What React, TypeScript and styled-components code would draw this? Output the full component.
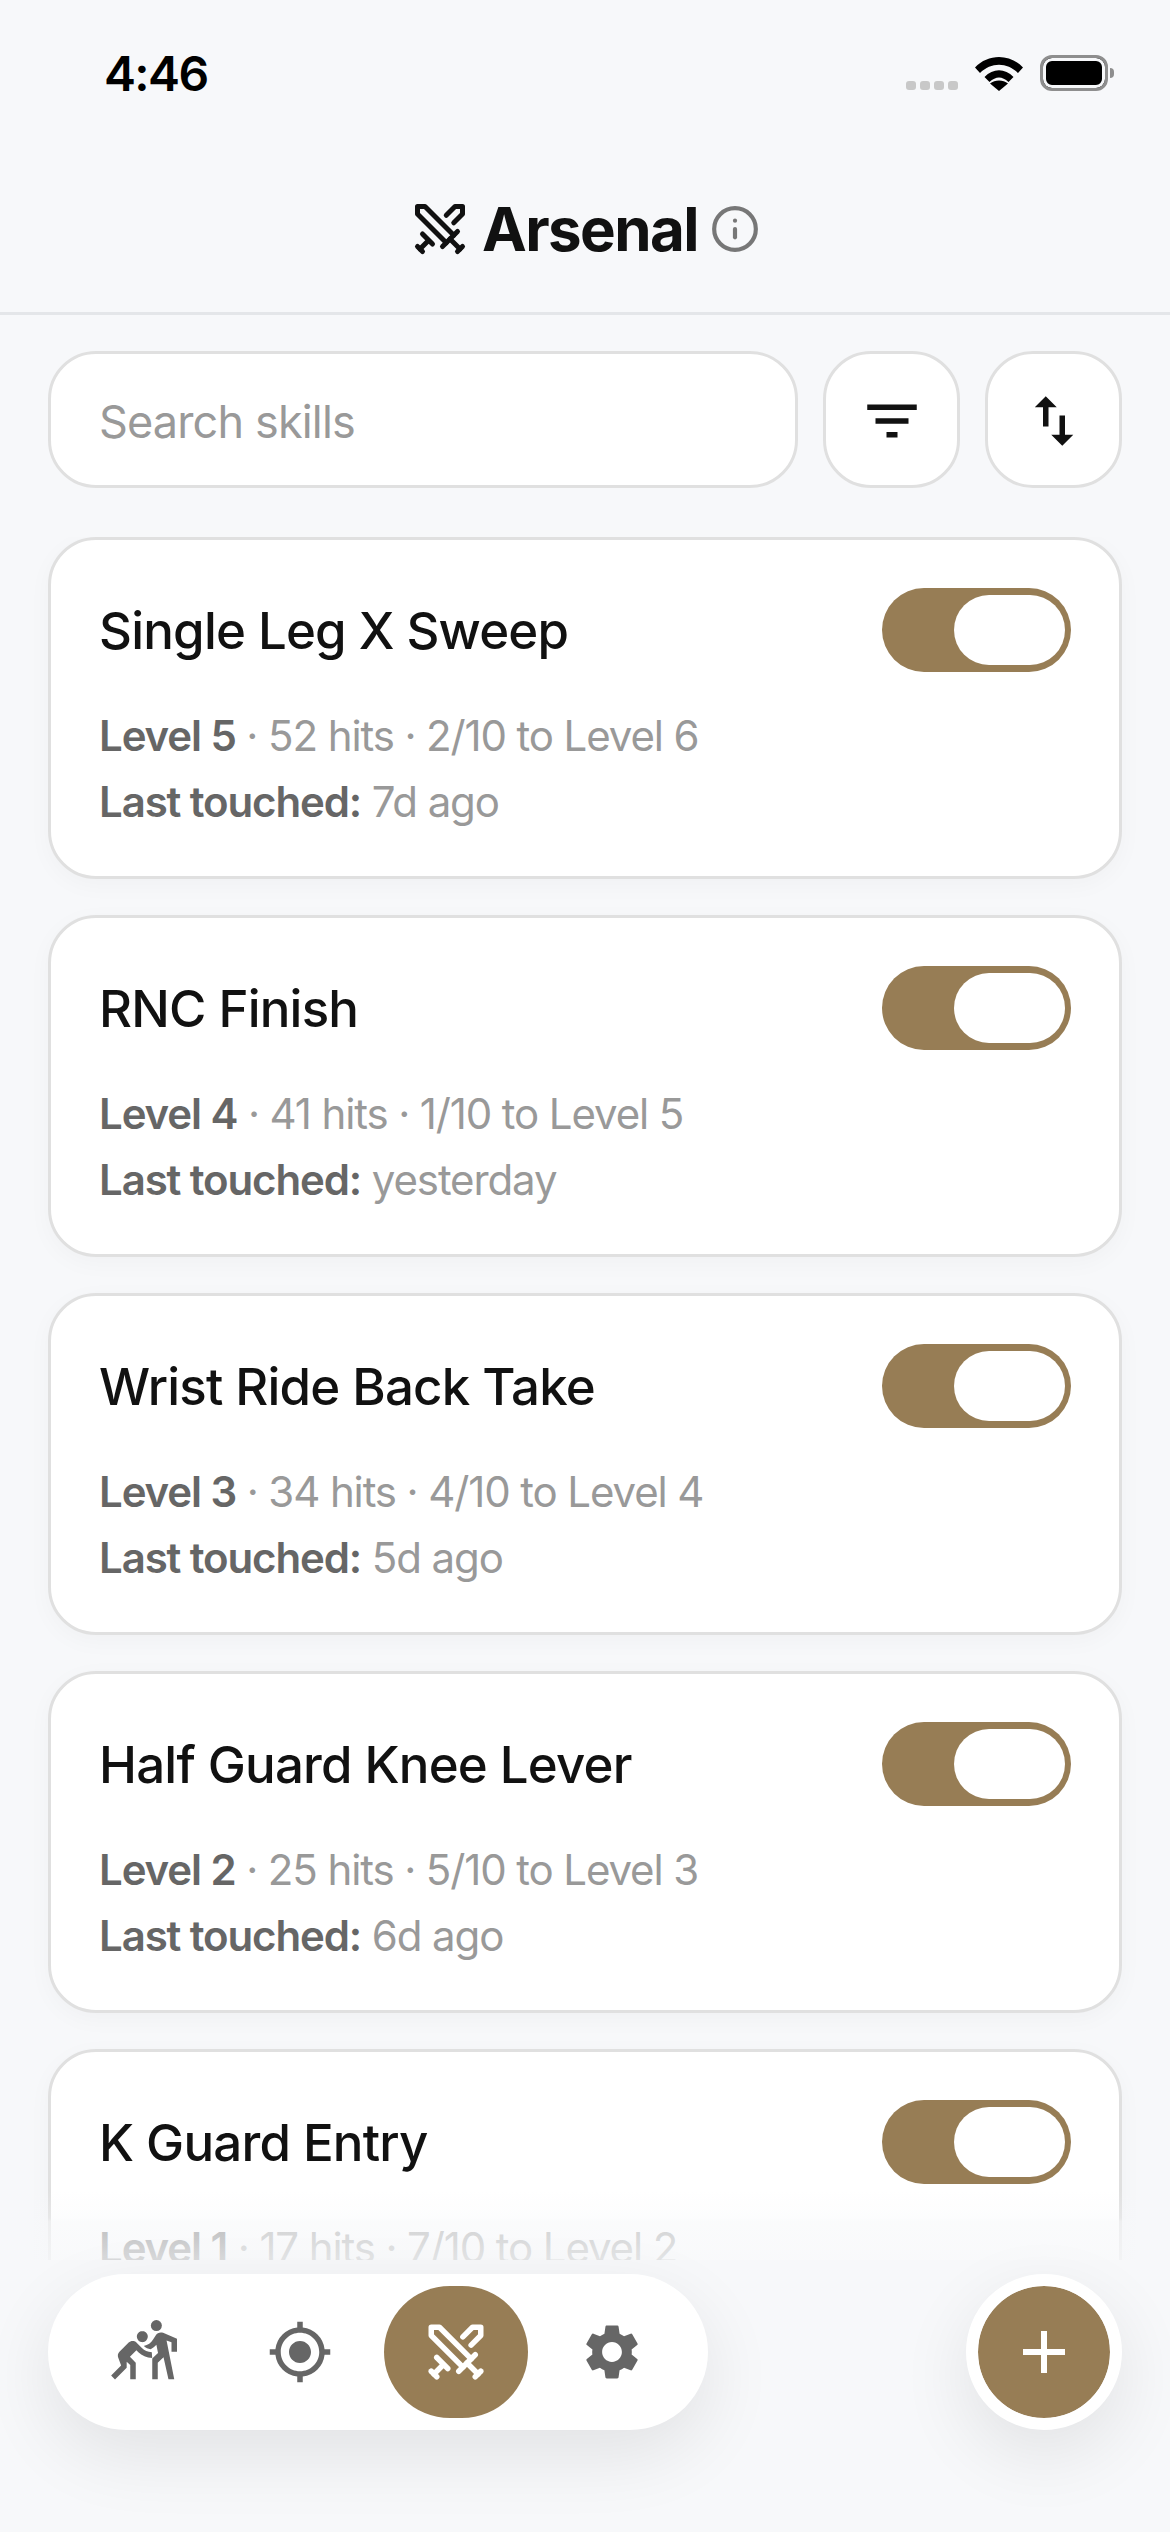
import React from 'react'
import styled, { createGlobalStyle } from 'styled-components'
import { Info, Swords } from 'lucide-react'
import { MdAdd, MdFilterList, MdGpsFixed, MdSettings, MdSportsKabaddi, MdSwapVert } from 'react-icons/md'

const ACCENT = '#977d55'

const skills = [
  { name: 'Single Leg X Sweep', level: 5, hits: 52, progress: 2, touched: '7d ago' },
  { name: 'RNC Finish', level: 4, hits: 41, progress: 1, touched: 'yesterday' },
  { name: 'Wrist Ride Back Take', level: 3, hits: 34, progress: 4, touched: '5d ago' },
  { name: 'Half Guard Knee Lever', level: 2, hits: 25, progress: 5, touched: '6d ago' },
  { name: 'K Guard Entry', level: 1, hits: 17, progress: 7, touched: '3d ago' },
]

const App = () => {
  return (
    <Screen>
      <GlobalStyle />
      <StatusBar>
        <Clock>4:46</Clock>
        <StatusIcons>
          <SignalDots>
            <i /><i /><i /><i />
          </SignalDots>
          <svg width="48" height="36" viewBox="0 0 48 36">
            <path d="M0 12.5 C13-1.5 35-1.5 48 12.5 L43 18 C32 7 16 7 5 18 Z" fill="#000" />
            <path d="M9.5 22 C18 13 30 13 38.500 22 L33.500 27 C27 21 21 21 14.500 27 Z" fill="#000" />
            <path d="M24 36 L15 28.500 C20 24.500 28 24.500 33 28.500 Z" fill="#000" />
          </svg>
          <Battery />
        </StatusIcons>
      </StatusBar>

      <Header>
        <Swords size={60} color="#111" strokeWidth={2} />
        <HeaderTitle>Arsenal</HeaderTitle>
        <Info size={50} color="#777" strokeWidth={2} />
      </Header>

      <Toolbar>
        <SearchBox placeholder="Search skills" readOnly />
        <IconButton><MdFilterList size={66} color="#111" /></IconButton>
        <IconButton><MdSwapVert size={66} color="#111" /></IconButton>
      </Toolbar>

      <SkillList>
        {skills.map((skill) => (
          <SkillCard key={skill.name}>
            <CardTop>
              <SkillName>{skill.name}</SkillName>
              <Toggle><Thumb /></Toggle>
            </CardTop>
            <MetaLine>
              <b>Level {skill.level}</b> · {skill.hits} hits · {skill.progress}/10 to Level {skill.level + 1}
            </MetaLine>
            <MetaLine>
              <b>Last touched:</b> {skill.touched}
            </MetaLine>
          </SkillCard>
        ))}
      </SkillList>

      <BottomFade />

      <TabBar>
        <Tab><MdSportsKabaddi size={66} color="#666" /></Tab>
        <Tab><MdGpsFixed size={66} color="#666" /></Tab>
        <Tab $active><Swords size={66} color="#fff" strokeWidth={2} /></Tab>
        <Tab><MdSettings size={66} color="#666" /></Tab>
      </TabBar>

      <AddButton><MdAdd size={72} color="#fff" /></AddButton>
    </Screen>
  )
}

const GlobalStyle = createGlobalStyle`
  html, body {
    margin: 0;
    padding: 0;
    background: #f7f8fa;
  }
  * {
    box-sizing: border-box;
  }
`

const Screen = styled.div`
  position: relative;
  width: 1170px;
  height: 2532px;
  overflow: hidden;
  display: flex;
  flex-direction: column;
  background: #f7f8fa;
  font-family: Inter, "Noto Sans", sans-serif;
  color: #111;
`

const StatusBar = styled.div`
  height: 144px;
  flex: none;
  display: flex;
  justify-content: space-between;
  align-items: flex-start;
  padding: 46px 62px 0 104px;
`

const Clock = styled.div`
  font-size: 48px;
  line-height: 56px;
  font-weight: 600;
  letter-spacing: -1.6px;
  color: #000;
`

const StatusIcons = styled.div`
  display: flex;
  align-items: flex-end;
  gap: 17px;
  padding-top: 9px;
`

const SignalDots = styled.div`
  display: flex;
  gap: 4px;
  margin-bottom: 1px;

  i {
    display: block;
    width: 10px;
    height: 9px;
    border-radius: 3px;
    background: #c8c8c8;
  }
`

const Battery = styled.div`
  position: relative;
  width: 68px;
  height: 36px;
  border: 3px solid #8e8e8e;
  border-radius: 12px;
  background: #000;
  box-shadow: inset 0 0 0 3px #f7f8fa;

  &::after {
    content: '';
    position: absolute;
    right: -9px;
    top: 10px;
    width: 4px;
    height: 10px;
    border-radius: 0 4px 4px 0;
    background: #8e8e8e;
  }
`

const Header = styled.header`
  height: 171px;
  flex: none;
  display: flex;
  align-items: center;
  justify-content: center;
  gap: 12px;
  padding-top: 2px;
  border-bottom: 3px solid #e4e6e9;
`

const HeaderTitle = styled.h1`
  margin: 0;
  font-size: 60px;
  line-height: 68px;
  font-weight: 700;
  letter-spacing: -1.6px;
  color: #111;
`

const Toolbar = styled.div`
  flex: none;
  display: flex;
  gap: 25px;
  padding: 36px 48px 0;
`

const SearchBox = styled.input`
  flex: 1;
  min-width: 0;
  height: 137px;
  padding: 3px 48px 0;
  border: 3px solid #e0e0e0;
  border-radius: 48px;
  background: #fff;
  font-family: inherit;
  font-size: 45px;
  letter-spacing: -0.85px;
  outline: none;

  &::placeholder {
    color: #999;
    opacity: 1;
  }
`

const IconButton = styled.button`
  flex: none;
  width: 137px;
  height: 137px;
  padding: 2px 0 0;
  display: flex;
  align-items: center;
  justify-content: center;
  border: 3px solid #e0e0e0;
  border-radius: 48px;
  background: #fff;
`

const SkillList = styled.div`
  flex: none;
  height: 1723px;
  margin-top: 49px;
  padding: 0 48px;
  overflow: hidden;
  display: flex;
  flex-direction: column;
  gap: 36px;
`

const SkillCard = styled.div`
  flex: none;
  height: 342px;
  padding: 48px;
  border: 3px solid #e0e0e0;
  border-radius: 48px;
  background: #fff;
  box-shadow: 0 6px 24px rgba(0, 0, 0, 0.03);
`

const CardTop = styled.div`
  display: flex;
  align-items: center;
  justify-content: space-between;
  height: 84px;
  margin-bottom: 31px;
`

const SkillName = styled.div`
  margin-top: 1px;
  font-size: 51px;
  line-height: 60px;
  font-weight: 500;
  letter-spacing: -0.8px;
  color: #111;
`

const Toggle = styled.div`
  width: 189px;
  height: 84px;
  padding: 7px 6px;
  display: flex;
  justify-content: flex-end;
  border-radius: 42px;
  background: ${ACCENT};
`

const Thumb = styled.div`
  width: 111px;
  height: 70px;
  border-radius: 35px;
  background: #fff;
`

const MetaLine = styled.div`
  font-size: 42px;
  line-height: 66px;
  letter-spacing: -1.12px;
  color: #999;

  b {
    font-weight: 600;
    color: #666;
  }
`

const BottomFade = styled.div`
  position: absolute;
  left: 0;
  right: 0;
  top: 2190px;
  height: 70px;
  background: linear-gradient(
    to bottom,
    rgba(247, 248, 250, 0),
    rgba(247, 248, 250, 0.3) 40%,
    rgba(247, 248, 250, 0.6) 45%,
    rgba(247, 248, 250, 0.8)
  );
`

const TabBar = styled.nav`
  position: absolute;
  left: 48px;
  top: 2274px;
  width: 660px;
  height: 156px;
  padding: 0 24px;
  display: flex;
  align-items: center;
  gap: 12px;
  border-radius: 78px;
  background: #fff;
  box-shadow: 0 24px 72px rgba(0, 0, 0, 0.09);
`

const Tab = styled.div<{ $active?: boolean }>`
  width: 144px;
  height: 132px;
  display: flex;
  align-items: center;
  justify-content: center;
  border-radius: 66px;
  background: ${({ $active }) => ($active ? ACCENT : 'transparent')};
`

const AddButton = styled.button`
  position: absolute;
  left: 966px;
  top: 2274px;
  width: 156px;
  height: 156px;
  padding: 0;
  display: flex;
  align-items: center;
  justify-content: center;
  border: 12px solid #fff;
  border-radius: 50%;
  background: ${ACCENT};
  background-clip: padding-box;
  box-shadow: 0 24px 72px rgba(0, 0, 0, 0.09);
`

export default App
